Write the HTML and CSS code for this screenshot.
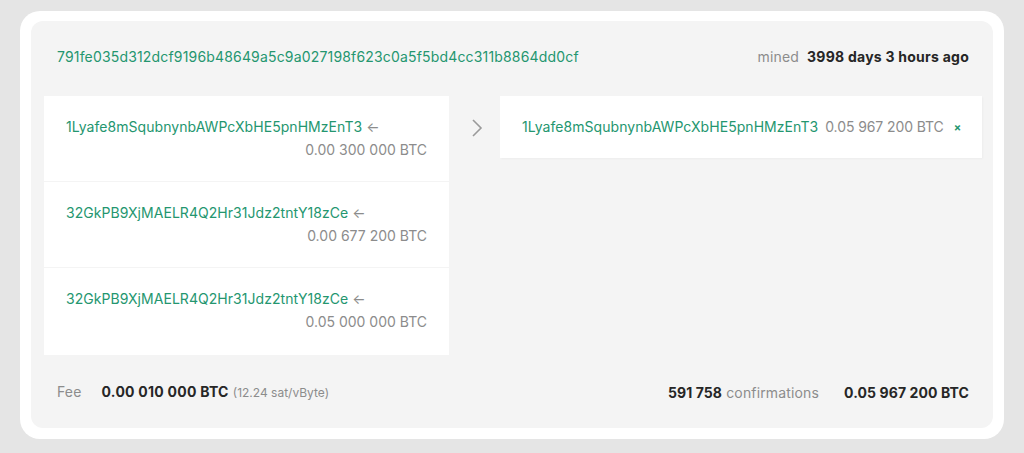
FILE: index.html
```html
<!DOCTYPE html>
<html lang="en">
<head>
<meta charset="utf-8">
<title>Transaction</title>
<link rel="stylesheet" href="styles.css">
</head>
<body>
<div class="card">
  <div class="panel">
    <div class="tx-head">
      <a class="hash">791fe035d312dcf9196b48649a5c9a027198f623c0a5f5bd4cc311b8864dd0cf</a>
      <div class="mined"><span class="muted">mined</span> <b>3998 days 3 hours ago</b></div>
    </div>
    <div class="tx-body">
      <div class="inputs">
        <div class="io-row">
          <div class="addr-line"><a class="addr">1Lyafe8mSqubnynbAWPcXbHE5pnHMzEnT3</a> <span class="larr">←</span></div>
          <div class="amount">0.00 300 000 BTC</div>
        </div>
        <div class="io-row">
          <div class="addr-line"><a class="addr">32GkPB9XjMAELR4Q2Hr31Jdz2tntY18zCe</a> <span class="larr">←</span></div>
          <div class="amount">0.00 677 200 BTC</div>
        </div>
        <div class="io-row">
          <div class="addr-line"><a class="addr">32GkPB9XjMAELR4Q2Hr31Jdz2tntY18zCe</a> <span class="larr">←</span></div>
          <div class="amount">0.05 000 000 BTC</div>
        </div>
      </div>
      <div class="arrow-col">
        <svg width="14" height="20" viewBox="0 0 14 20"><path d="M3 2 L11 10 L3 18" fill="none" stroke="#9a9a9a" stroke-width="1.6"/></svg>
      </div>
      <div class="outputs">
        <div class="out-row">
          <a class="addr">1Lyafe8mSqubnynbAWPcXbHE5pnHMzEnT3</a>
          <span class="out-amount">0.05 967 200 BTC</span>
          <span class="spent">×</span>
        </div>
      </div>
    </div>
    <div class="tx-foot">
      <div class="fee"><span class="muted fee-label">Fee</span> <b>0.00 010 000 BTC</b> <span class="small muted">(12.24 sat/vByte)</span></div>
      <div class="totals"><span><b>591 758</b> <span class="muted">confirmations</span></span><b class="total">0.05 967 200 BTC</b></div>
    </div>
  </div>
</div>
</body>
</html>
```

FILE: styles.css
```css
html, body {
  margin: 0;
  padding: 0;
}
body {
  background: #e5e5e5;
  font-family: Inter, "Noto Sans", sans-serif;
  font-size: 14px;
  letter-spacing: 0.15px;
  line-height: 18px;
  color: #2b2b2b;
  padding: 11px 20px 14px 20px;
  white-space: nowrap;
}
.card {
  background: #ffffff;
  border-radius: 20px;
  padding: 10px 11px 11px 11px;
}
.panel {
  background: #f4f4f4;
  border-radius: 12px;
}
.tx-head {
  display: flex;
  justify-content: space-between;
  align-items: center;
  padding: 27px 24px 30px 26px;
}
.hash {
  color: #24966f;
  text-decoration: none;
  letter-spacing: 0.17px;
}
.addr {
  color: #24966f;
  text-decoration: none;
  letter-spacing: 0.05px;
}
.muted {
  color: #8c8c8c;
}
b {
  font-weight: 700;
  color: #262626;
  letter-spacing: 0.25px;
}
.mined .muted {
  margin-right: 4px;
}
.tx-body {
  display: flex;
  margin: 0 11px 0 13px;
  align-items: flex-start;
}
.inputs {
  width: 405px;
  flex-shrink: 0;
  display: flex;
  flex-direction: column;
  gap: 1px;
  background: #f4f4f4;
  padding-bottom: 3px;
}
.io-row {
  background: #ffffff;
  padding: 22px 22px 22px 22px;
  display: flex;
  flex-direction: column;
  gap: 5px;
}
.io-row:last-child {
  padding-bottom: 24px;
}
.larr {
  color: #8c8c8c;
}
.amount {
  text-align: right;
  color: #8c8c8c;
  letter-spacing: 0;
}
.arrow-col {
  width: 51px;
  flex-shrink: 0;
  display: flex;
  justify-content: center;
  padding-top: 22px;
  padding-left: 4px;
  box-sizing: border-box;
}
.outputs {
  flex: 1;
  min-width: 0;
}
.out-row {
  background: #ffffff;
  padding: 22px 22px;
  display: flex;
  align-items: center;
  box-shadow: 1px 1px 2px rgba(0,0,0,0.03);
}
.out-amount {
  color: #8c8c8c;
  margin-left: 7px;
  letter-spacing: -0.1px;
}
.spent {
  color: #24966f;
  font-size: 11px;
  font-weight: 700;
  margin-left: 10px;
}
.tx-foot {
  display: flex;
  justify-content: space-between;
  align-items: center;
  padding: 25px 24px 26px 26px;
}
.fee-label {
  margin-right: 16px;
}
.small {
  font-size: 12px;
  letter-spacing: 0;
}
.totals {
  display: flex;
  gap: 25px;
}
.totals b {
  letter-spacing: 0.1px;
}
```
